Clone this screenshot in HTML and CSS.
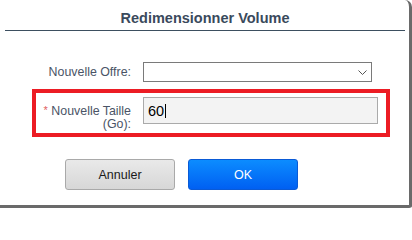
FILE: index.html
```html
<!DOCTYPE html>
<html lang="fr">
<head>
<meta charset="utf-8">
<title>Redimensionner Volume</title>
<link rel="stylesheet" href="styles.css">
</head>
<body>
<div class="dialog">
  <div class="header">Redimensionner Volume</div>
  <div class="form">
    <div class="row row-offer">
      <label class="label">Nouvelle Offre:</label>
      <div class="select">
        <svg class="chevron" width="9" height="5" viewBox="0 0 9 5"><polyline points="0.5,0.5 4.5,4.5 8.5,0.5" fill="none" stroke="#555" stroke-width="1"/></svg>
      </div>
    </div>
    <div class="highlight">
      <div class="row row-size">
        <label class="label label-two"><span class="line"><span class="req">*</span> Nouvelle Taille</span><span class="line">(Go):</span></label>
        <div class="input"><span class="value">60</span><span class="caret"></span></div>
      </div>
    </div>
    <div class="actions">
      <button class="btn btn-cancel">Annuler</button>
      <button class="btn btn-ok">OK</button>
    </div>
  </div>
</div>
</body>
</html>
```
FILE: styles.css
```css
html, body {
  margin: 0;
  padding: 0;
  background: #ffffff;
  height: 208px;
  overflow: hidden;
}
body {
  font-family: "Liberation Sans", Arial, sans-serif;
}
.dialog {
  width: 409px;
  height: 205px;
  background: #ffffff;
  border-right: 3px solid #6a6a6a;
  border-bottom: 3px solid #6a6a6a;
  border-top-right-radius: 7px;
  border-bottom-right-radius: 3px;
}
.header {
  margin: 0 4px 0 5px;
  padding-top: 10px;
  padding-bottom: 4px;
  height: 16px;
  line-height: 16px;
  font-size: 14.5px;
  font-weight: bold;
  color: #3a4a5c;
  text-align: center;
  border-bottom: 1px solid #3d4f60;
}
.form {
  padding-top: 31px;
}
.row {
  display: flex;
  gap: 12px;
}
.row-offer {
  margin-left: 36px;
  align-items: center;
  height: 20px;
}
.label {
  width: 95px;
  flex: none;
  text-align: right;
  font-size: 12.4px;
  color: #4a5466;
  white-space: nowrap;
}
.label-two {
  display: flex;
  flex-direction: column;
  align-items: flex-end;
  margin-top: 6px;
}
.line {
  display: block;
  height: 14px;
  line-height: 14px;
}
.req {
  color: #e06060;
  font-size: 11px;
  vertical-align: 1px;
}
.select {
  width: 229px;
  height: 20px;
  box-sizing: border-box;
  border: 1px solid #7a7a7a;
  background: #ffffff;
  display: flex;
  align-items: center;
  justify-content: flex-end;
  padding-right: 4px;
}
.chevron {
  display: block;
}
.highlight {
  margin: 7px 0 0 32px;
  width: 350px;
  height: 36px;
  border: 4px solid #ec1c24;
  padding-top: 4px;
}
.input {
  width: 235px;
  height: 27px;
  box-sizing: border-box;
  border: 1px solid #aaaaaa;
  background: #f3f3f3;
  display: flex;
  align-items: center;
  padding-left: 4px;
  font-size: 14.5px;
  color: #000000;
}
.caret {
  display: inline-block;
  width: 1px;
  height: 14px;
  background: #000000;
  margin-left: 1px;
}
.actions {
  display: flex;
  gap: 13px;
  padding-left: 65px;
  margin-top: 22px;
}
.btn {
  width: 110px;
  height: 31px;
  box-sizing: border-box;
  border-radius: 3px;
  font-family: "Liberation Sans", Arial, sans-serif;
  font-size: 12.5px;
  padding: 0;
  margin: 0;
}
.btn-cancel {
  background: linear-gradient(#e9e9e9, #d7d7d7);
  border: 1px solid #a9a9a9;
  color: #1a1a1a;
}
.btn-ok {
  background: linear-gradient(#0c8cff, #0060f2);
  border: 1px solid #0a5ad6;
  color: #ffffff;
}
```
